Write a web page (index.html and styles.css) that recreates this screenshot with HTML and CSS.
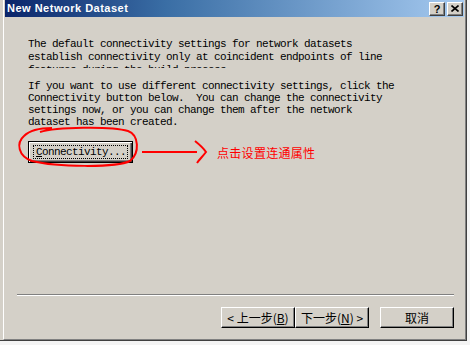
FILE: index.html
```html
<!DOCTYPE html>
<html lang="zh-cn">
<head>
  <meta charset="UTF-8" />
  <title>New Network Dataset</title>
  <link rel="stylesheet" href="styles.css">
</head>
<body>
  <div class="window">
    <div class="inner">
      <div class="titlebar">
        <span class="title">New Network Dataset</span>
        <span class="cap-btn help">?</span>
        <span class="cap-btn close">
          <svg width="8" height="7" viewBox="0 0 8 7"><path d="M0.5 0.5 L7.5 6.5 M7.5 0.5 L0.5 6.5" stroke="#000" stroke-width="1.6" fill="none"/></svg>
        </span>
      </div>

      <div class="content">
        <p class="msg clipped">The default connectivity settings for network datasets
establish connectivity only at coincident endpoints of line
features during the build process.</p>
        <p class="msg second">If you want to use different connectivity settings, click the
Connectivity button below.  You can change the connectivity
settings now, or you can change them after the network
dataset has been created.</p>

        <div class="conn-row">
          <button class="btn default"><span class="focus"><u>C</u>onnectivity...</span></button>
          <svg class="circle" width="126" height="44" viewBox="0 0 126 44">
            <path d="M24 6 C40 1, 95 0, 112 5 C123 9, 124 27, 114 35 C100 42, 40 41, 16 35 C2 30, 0 17, 8 10 C14 4, 25 2, 36 2" stroke="#ff0000" stroke-width="2" fill="none"/>
          </svg>
          <svg class="arrow" width="73" height="26" viewBox="0 0 73 26">
            <path d="M5 13 L60 13" stroke="#ff0000" stroke-width="2" fill="none"/>
            <path d="M58 2 C63 6, 67 10, 69 13 C66 17, 62 21, 60 24" stroke="#ff0000" stroke-width="2" fill="none"/>
          </svg>
          <span class="note">点击设置连通属性</span>
        </div>

        <div class="separator"></div>

        <div class="actions">
          <button class="btn wide">&lt; 上一步(<u>B</u>)</button>
          <button class="btn wide">下一步(<u>N</u>) &gt;</button>
          <button class="btn wide cancel">取消</button>
        </div>
      </div>
    </div>
  </div>
</body>
</html>
```

FILE: styles.css
```css
* { box-sizing: border-box; }

body {
  margin: 0;
  background: #f4f4f4;
  font-family: "Liberation Mono", monospace;
}

.window {
  width: 467px;
  height: 341px;
  background: #d4d0c8;
  padding-left: 3px;
  border-right: 1px solid #404040;
  border-bottom: 1px solid #404040;
}

.inner {
  height: 100%;
  display: flex;
  flex-direction: column;
  padding-left: 1px;
  border-left: 1px solid #fff;
  border-right: 1px solid #808080;
  border-bottom: 1px solid #808080;
}

.titlebar {
  height: 17px;
  margin-right: 1px;
  display: flex;
  align-items: center;
  padding: 0 1px 0 2px;
  background: linear-gradient(to right, #0a246a, #3a6ea5 35%, #a6caf0);
}

.title {
  flex: 1;
  color: #fff;
  font-family: "Liberation Sans", Arial, sans-serif;
  font-weight: bold;
  font-size: 11px;
  letter-spacing: 0.5px;
  line-height: 17px;
}

.cap-btn {
  width: 16px;
  height: 14px;
  margin-left: 2px;
  background: #d4d0c8;
  border-top: 1px solid #fff;
  border-left: 1px solid #fff;
  border-right: 1px solid #404040;
  border-bottom: 1px solid #404040;
  box-shadow: inset -1px -1px #808080;
  display: flex;
  align-items: center;
  justify-content: center;
}

.help {
  font-family: "Liberation Sans", Arial, sans-serif;
  font-weight: bold;
  font-size: 11px;
  line-height: 12px;
  color: #000;
}

.content {
  flex: 1;
  display: flex;
  flex-direction: column;
  padding: 21px 11px 11px 12px;
}

.msg {
  margin: 0 0 0 11px;
  white-space: pre;
  font-size: 11px;
  letter-spacing: -0.6px;
  color: #000;
}

.clipped {
  line-height: 13px;
  height: 30px;
  overflow: hidden;
}

.second {
  margin-top: 12px;
  line-height: 12px;
}

.conn-row {
  position: relative;
  display: flex;
  align-items: center;
  margin: 11px 0 0 11px;
}

.btn {
  background: #d4d0c8;
  border: 1px solid #000;
  border-top-color: #fff;
  border-left-color: #fff;
  box-shadow: inset -1px -1px #808080;
  color: #000;
  padding: 0;
  font-family: "Noto Sans CJK SC", sans-serif;
  font-size: 12px;
}

.btn.default {
  width: 105px;
  height: 22px;
  border: 1px solid #000;
  box-shadow: inset 1px 1px #fff, inset -1px -1px #404040, inset -2px -2px #808080;
  padding: 3px 4px;
  font-family: "Liberation Mono", monospace;
  font-size: 11px;
  letter-spacing: -0.6px;
}

.focus {
  display: block;
  height: 100%;
  border: 1px dotted #000;
  line-height: 12px;
  text-align: left;
  padding-left: 2px;
}

.circle {
  position: absolute;
  left: -12px;
  top: -13px;
}

.arrow {
  margin-left: 4px;
}

.note {
  margin-left: 7px;
  color: #ff0000;
  font-family: "Noto Sans CJK SC", sans-serif;
  font-size: 12px;
  letter-spacing: 0.3px;
}

.separator {
  margin-top: auto;
  height: 2px;
  border-top: 1px solid #808080;
  border-bottom: 1px solid #fff;
}

.actions {
  display: flex;
  justify-content: flex-end;
  margin-top: 11px;
}

.btn.wide {
  width: 74px;
  height: 21px;
  line-height: 17px;
}

.btn.cancel {
  margin-left: 11px;
}
```
